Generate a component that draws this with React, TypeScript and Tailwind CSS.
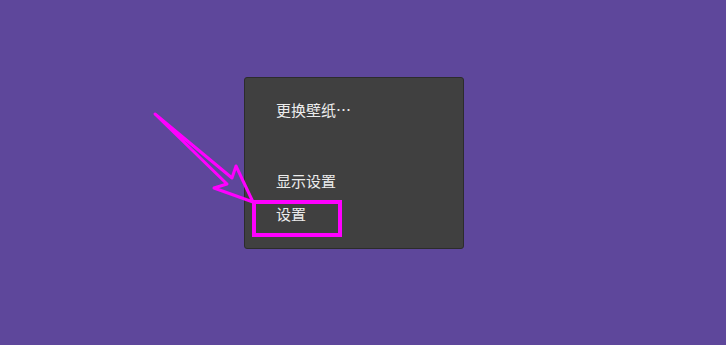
import React from "react";

export default function App() {
  const font = { fontFamily: '"Noto Sans CJK SC", "Noto Sans", sans-serif' };
  return (
    <div className="relative h-[345px] w-full overflow-hidden bg-[#5e479b] pl-[244px] pt-[77px]" style={font}>
      <div className="flex w-[220px] flex-col rounded-[3px] border border-[#2c2c2c] bg-[#404040] pb-[17px] pt-[16px] text-[15px] text-[#ececec]">
        <div className="flex h-[33px] items-center pl-[31px]">更换壁纸…</div>
        <div className="h-[38px]" />
        <div className="flex h-[33px] items-center pl-[31px]">显示设置</div>
        <div className="flex h-[33px] items-center pl-[31px]">设置</div>
      </div>
      <div className="absolute left-[252px] top-[200px] h-[37px] w-[90px] border-[4px] border-[#ff00ff]" />
      <svg className="absolute left-0 top-0" width="726" height="345" viewBox="0 0 726 345">
        <polygon
          points="155,114 232,178 236,166 253,202 214,188 227,184"
          fill="none"
          stroke="#ff00ff"
          strokeWidth="3"
          strokeLinejoin="round"
        />
      </svg>
    </div>
  );
}
